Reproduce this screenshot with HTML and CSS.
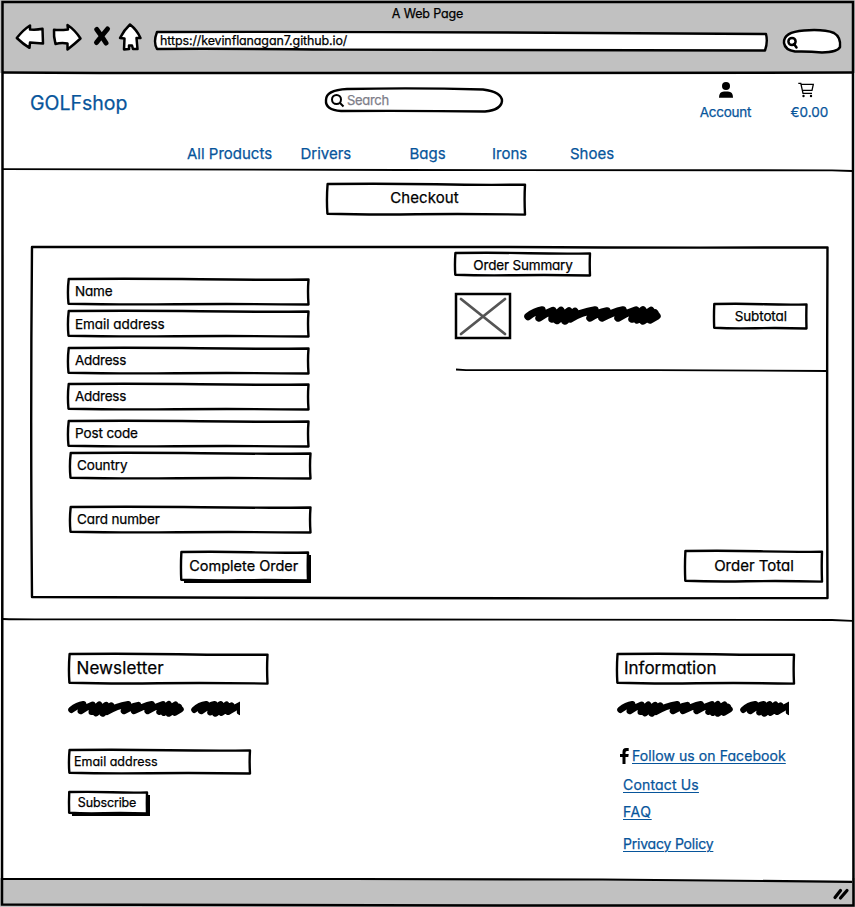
FILE: index.html
```html
<!DOCTYPE html>
<html lang="en">
<head>
<meta charset="utf-8">
<title>GOLFshop – Checkout</title>
<link rel="stylesheet" href="styles.css">
</head>
<body>
<svg class="defs" aria-hidden="true">
  <symbol id="box" viewBox="0 0 100 100" preserveAspectRatio="none">
    <path d="M.3 0 Q30 -2 55 1 T100 2 Q99.600 50 100 102 Q70 99 45 101 T.2 99 Q-.3 50 .3 0Z"/>
  </symbol>
  <symbol id="box2" viewBox="0 0 100 100" preserveAspectRatio="none">
    <path d="M0 0 Q40 -.3 60 0 T100 .1 Q99.900 50 100 100 Q70 100.200 40 100 T0 99.700 Q-.2 50 0 0Z"/>
  </symbol>
  <symbol id="scribble" viewBox="0 0 137 20" preserveAspectRatio="none">
    <path d="M4 11.500 Q11 6 18 5 L15 13 Q22 8 29 5.500 L28 14 L37 5.500 L33 15.500 L45 6 L41 16 L51 6.500 L46 14 Q57 7 71 5 L66 13 Q73 8 83 6 L78 13 Q89 7 99 5 L94 13 Q102 8 112 5 L108 14 L119 5 L113 15 L127 5.500 L119 16 L131 8 L126 15 L133 11"/>
  </symbol>
  <symbol id="scribble-short" viewBox="0 0 58 20" preserveAspectRatio="none">
    <path d="M4 11.500 Q10 6 18 5 L12 13 Q22 6 28 5 L23 14.500 L35 5 L29 16 L42 5.500 L36 15 L48 6.500 L44 14 Q52 9 62 4 L58 14"/>
  </symbol>
</svg>

<div class="window">
  <header class="chrome">
    <p class="title"><span class="t t-title">A Web Page</span></p>
    <div class="bar">
      <svg class="tools" viewBox="0 0 130 34">
        <path class="outl" d="M.8 15 Q7 7 14 2.500 L14 6.500 Q21 7 26.500 5.800 L27 20.500 Q20 20 14 19.500 L13.500 24.800 Q7 21 .8 15Z"/>
        <path class="outl" d="M38 6.800 Q44 7.500 52 6.500 L51.500 2 Q59 7 64.500 15.500 Q58 21.500 51.500 26.500 L51.500 20.500 Q45 19.500 39.500 21 Q37.500 13 38 6.800Z"/>
        <path class="cross" d="M80.800 6.500 Q85 12 90 20 M91.500 6 Q86.500 12 80.500 19.500"/>
        <path class="outl" d="M114 1.500 Q121 7 124.500 15 L120.500 15 L121.500 26 L117 26 L116 22.500 L113 22.500 L113 26 L108 26.500 L108.500 15.500 L104 15 Q108 7 114 1.500Z"/>
      </svg>
      <div class="address">
        <svg class="ink" viewBox="0 0 612 19" preserveAspectRatio="none"><path d="M2 0 Q300 -.5 611 2 Q613 10 610 18.500 Q300 18.800 180 17.600 T2 17 Q-2 10 2 0Z"/></svg>
        <span class="t t-url">https://kevinflanagan7.github.io/</span>
      </div>
      <svg class="pill" viewBox="0 0 60 24">
        <path class="outl" d="M2 14 Q1 3 22 1.500 Q42 0 52 4 Q59 8 58 18 Q56 23 40 23.500 Q26 22 13 22.500 Q3 21 2 14Z"/>
        <circle class="lens" cx="10" cy="12.500" r="3.600"/><path class="lens" d="M12 15 L14.500 18.500"/>
      </svg>
    </div>
  </header>

  <section class="top">
    <div class="row">
      <a class="brand"><span class="t t-brand">GOLFshop</span></a>
      <div class="search">
        <svg class="ink" viewBox="0 0 178 24"><path d="M22 1 Q90 -.5 158 1.500 Q177 4 177 13 Q176 22 160 23.500 Q90 22.500 16 23 Q0 22 1 12 Q1 2 22 1Z"/></svg>
        <svg class="glass" viewBox="0 0 14 14"><circle cx="5.500" cy="5.500" r="4.500"/><path d="M9 9 L12.500 12.500"/></svg>
        <span class="t t-search">Search</span>
      </div>
      <a class="account">
        <svg viewBox="0 0 16 16"><circle cx="8" cy="4" r="4"/><path d="M1 15.800 Q1 9.500 6 9.500 H10 Q15 9.500 15 15.800Z"/></svg>
        <span class="t t-acc">Account</span>
      </a>
      <a class="cart">
        <svg viewBox="0 0 16 16"><path class="thin" d="M.3 1.300 H2.800 L5 11.300 H14 M3.300 2.300 H15.300 L14 8.300 H4.500"/><circle cx="5.500" cy="14" r="1.200"/><circle cx="13" cy="14" r="1.200"/></svg>
        <span class="t t-cart">€0.00</span>
      </a>
    </div>
    <nav class="menu">
      <a><span class="t t-nav">All Products</span></a><a><span class="t t-nav">Drivers</span></a><a><span class="t t-nav">Bags</span></a><a><span class="t t-nav">Irons</span></a><a><span class="t t-nav">Shoes</span></a>
    </nav>
    <svg class="rule" viewBox="0 0 850 4" preserveAspectRatio="none"><path d="M0 1.200 L400 2 L830 2.300 L850 3"/></svg>
  </section>

  <main class="main">
    <h1 class="box checkout"><svg class="ink"><use href="#box"/></svg><span class="t t-check">Checkout</span></h1>
    <div class="panel">
      <svg class="ink"><use href="#box2"/></svg>
      <form class="form">
        <div class="box field"><svg class="ink"><use href="#box"/></svg><span class="t t-name">Name</span></div>
        <div class="box field f2"><svg class="ink"><use href="#box"/></svg><span class="t t-email">Email address</span></div>
        <div class="box field f3"><svg class="ink"><use href="#box"/></svg><span class="t t-addr">Address</span></div>
        <div class="box field f4"><svg class="ink"><use href="#box"/></svg><span class="t t-addr">Address</span></div>
        <div class="box field f5"><svg class="ink"><use href="#box"/></svg><span class="t t-field">Post code</span></div>
        <div class="box field f6"><svg class="ink"><use href="#box"/></svg><span class="t t-field">Country</span></div>
        <div class="box field f7"><svg class="ink"><use href="#box"/></svg><span class="t t-field">Card number</span></div>
        <div class="box btn complete"><svg class="ink"><use href="#box"/></svg><span class="t t-comp">Complete Order</span></div>
      </form>
      <section class="summary">
        <h2 class="box sumhead"><svg class="ink"><use href="#box"/></svg><span class="t t-sum">Order Summary</span></h2>
        <div class="item">
          <svg class="thumb" viewBox="0 0 54 44"><rect x="0" y="0" width="54" height="44"/><path d="M5 5 L49 40 M49 5 L5 40"/></svg>
          <svg class="scr"><use href="#scribble"/></svg>
          <div class="box subtotal"><svg class="ink"><use href="#box"/></svg><span class="t t-field">Subtotal</span></div>
        </div>
        <svg class="rule" viewBox="0 0 372 4" preserveAspectRatio="none"><path d="M0 .5 L10 1.200 L200 1.200 L372 2"/></svg>
        <div class="box total"><svg class="ink"><use href="#box"/></svg><span class="t t-total">Order Total</span></div>
      </section>
    </div>
    <svg class="rule main-rule" viewBox="0 0 850 4" preserveAspectRatio="none"><path d="M0 1 Q15 1.500 50 1.300 L400 1.500 L830 2 L850 2.800"/></svg>
  </main>

  <footer class="foot">
    <section class="news">
      <h2 class="box head"><svg class="ink"><use href="#box"/></svg><span class="t t-news">Newsletter</span></h2>
      <div class="scrs"><svg class="s1"><use href="#scribble"/></svg><svg class="s2"><use href="#scribble-short"/></svg></div>
      <div class="box mail"><svg class="ink"><use href="#box"/></svg><span class="t t-mail">Email address</span></div>
      <div class="box btn subscribe"><svg class="ink"><use href="#box"/></svg><span class="t t-subs">Subscribe</span></div>
    </section>
    <section class="info">
      <h2 class="box head"><svg class="ink"><use href="#box"/></svg><span class="t t-info">Information</span></h2>
      <div class="scrs"><svg class="s1"><use href="#scribble"/></svg><svg class="s2"><use href="#scribble-short"/></svg></div>
      <ul class="links">
        <li class="fb"><svg viewBox="0 0 9 16"><path d="M2.500 16 V9 H0 V6 H2.500 V4 Q2.500 0 6 0 H8.700 V3 H7 Q5.500 3 5.500 4.500 V6 H8.700 L8.300 9 H5.500 V16Z"/></svg><a class="t t-l1">Follow us on Facebook</a></li>
        <li><a class="t t-l2">Contact Us</a></li>
        <li><a class="t t-l3">FAQ</a></li>
        <li><a class="t t-l4">Privacy Policy</a></li>
      </ul>
    </section>
  </footer>

  <div class="status">
    <svg class="edge" viewBox="0 0 850 6" preserveAspectRatio="none"><path class="fill" d="M0 0 H850 V3 L600 1 L0 0Z"/><path d="M0 1 L350 1 L600 1.500 L850 3.800"/></svg>
    <svg class="grip" viewBox="0 0 16 13"><path d="M2 10.500 L7.500 3.500 M7.500 11 L14 3.500"/></svg>
  </div>
  <svg class="frame" viewBox="0 0 855 907"><path d="M2.500 2 L300 2 L853 2 L853 500 L853.500 905.500 L500 905.500 L2 904.500 L2.500 400Z"/><path d="M3 72.500 L100 73 L500 73 L853 72.500"/></svg>
</div>
</body>
</html>
```
FILE: styles.css
```css
* { box-sizing: border-box; }
body { margin: 0; background: #fff; color: #000; font: 13px/16px Inter, "Liberation Sans", sans-serif; font-feature-settings: "cv11"; }
h1, h2, p, ul { margin: 0; padding: 0; font: inherit; list-style: none; }
svg { display: block; overflow: visible; fill: none; stroke: none; flex: none; }
.defs { position: absolute; width: 0; height: 0; }
.t { white-space: nowrap; -webkit-text-stroke: .25px currentColor; }
.window { position: relative; width: 855px; height: 907px; overflow: hidden; display: grid; grid-template-rows: 73px 97px 450px 260px 27px; }
.frame { position: absolute; inset: 0; width: 855px; height: 907px; pointer-events: none; stroke: #000; stroke-width: 2.5; }
.ink { position: absolute; inset: 0; width: 100%; height: 100%; z-index: -1; fill: #fff; stroke: #000; stroke-width: 2.4; stroke-linejoin: round; }
.box > .ink { left: -.2px; top: -.4px; }
.ink path, #box path, #box2 path { vector-effect: non-scaling-stroke; }
#box, #box2 { overflow: visible; }
.rule { width: 100%; height: 4px; stroke: #000; stroke-width: 1.8; }

/* Browser toolbar */
.chrome { background: #c1c1c1; }
.title { text-align: center; padding-top: 5px; height: 23px; }
.bar { display: flex; padding-left: 16px; }
.tools { width: 130px; height: 34px; }
.outl { fill: #fff; stroke: #000; stroke-width: 2.5; stroke-linejoin: round; }
.cross { stroke: #000; stroke-width: 5; stroke-linecap: round; }
.lens { stroke: #000; stroke-width: 2.5; stroke-linecap: round; }
.address { position: relative; z-index: 0; width: 612px; height: 19px; margin: 9px 0 0 9px; padding: 0 0 0 5px; line-height: 16px; }
.pill { width: 60px; height: 24px; margin: 5.500px 0 0 15px; }

/* Shop header */
.top { display: grid; grid-template-rows: 70px 25px 4px; padding: 0 3px; color: #07559b; }
.row { display: flex; }
.brand { width: 295px; padding: 20px 0 0 27px; line-height: 20px; }
.search { position: relative; z-index: 0; display: flex; width: 178px; height: 24px; margin: 15px 0 0 27px; padding: 6px 0 0 6px; }
.glass { width: 14px; height: 14px; margin-right: 2px; stroke: #000; stroke-width: 2; }
.account, .cart { display: flex; flex-direction: column; align-items: center; padding-top: 9px; gap: 6px; }
.account { width: 52px; margin-left: 196.500px; }
.cart { width: 38px; margin-left: 39px; }
.account svg, .cart svg { width: 16px; height: 16px; fill: #000; }
.cart svg { margin-left: -7px; }
.account .t, .cart .t { line-height: 16px; }
.thin { fill: none; stroke: #000; stroke-width: 1.3; }
.menu { display: grid; grid-template-columns: 113.500px 109px 82.500px 78px 60px; padding: 2px 0 0 184px; line-height: 18px; }

/* Checkout */
.box { position: relative; z-index: 0; display: flex; align-items: center; flex: none; }
.main { display: flex; flex-direction: column; height: 450px; }
.checkout { width: 198px; height: 30px; margin: 14px 0 0 327.500px; padding: 0 4px 1.500px 0; justify-content: center; }
.panel { position: relative; z-index: 0; display: flex; flex: none; width: 795.500px; height: 351px; margin: 33px 0 0 32px; }
.form { width: 300px; padding: 32px 0 0 36.500px; }
.field { width: 240.500px; height: 25px; padding: 0 0 1.500px 6.500px; }
.f2 { margin-top: 7.500px; padding-bottom: .5px; }
.f3 { margin-top: 11.500px; }
.f4 { margin-top: 11px; }
.f5 { margin-top: 12px; }
.f6 { margin: 7px 0 0 2px; }
.f7 { margin: 29px 0 0 2px; }
.btn { justify-content: center; box-shadow: 3px 3px 0 #000; }
.complete { width: 127px; height: 28px; margin: 20px 0 0 112.500px; padding-right: 1.500px; }
.summary { width: 372px; margin-left: 123.500px; padding-top: 6px; }
.sumhead { width: 135px; height: 22px; padding-top: 2px; justify-content: center; }
.item { display: flex; height: 94px; padding-top: 19px; }
.thumb { width: 54px; height: 44px; stroke: #000; stroke-width: 2.500; }
.thumb path { stroke: #555; stroke-width: 2.800; stroke-linecap: round; }
.scr { width: 137px; height: 20px; margin: 10.500px 0 0 14.500px; }
#scribble path, #scribble-short path { stroke: #000; stroke-width: 7.500; stroke-linecap: round; stroke-linejoin: round; }
.subtotal { width: 92.500px; height: 24px; margin: 10px 0 0 53.500px; justify-content: center; }
.total { width: 137px; height: 30px; margin: 178.500px 0 0 230px; padding-bottom: 1.500px; justify-content: center; }
.main-rule { margin: 20px 3px 0; width: 849px; }

/* Footer */
.foot { display: flex; padding-top: 34px; }
.news { width: 482px; margin-left: 69px; }
.info { margin-left: 66.500px; }
.head { width: 198.500px; height: 29px; padding: 0 0 1px 7.500px; }
.info .head { width: 177px; padding-left: 6.500px; }
.scrs { display: flex; height: 17px; margin-top: 16.500px; margin-left: -1px; }
.s1 { width: 116px; height: 17px; }
.s2 { width: 49px; height: 17px; margin-left: 7px; overflow: hidden; }
.mail { width: 181px; height: 23px; margin-top: 34px; padding: 0 0 1px 5px; }
.subscribe { width: 78px; height: 21px; margin-top: 18.500px; padding-right: 2px; }
.links { padding: 31.500px 0 0 5.500px; color: #07559b; }
.links li { height: 28.500px; display: flex; }
.links li:nth-child(3) { height: 32px; margin-top: -1px; }
.links a { text-decoration: underline; text-underline-offset: 2px; text-decoration-thickness: 1px; }
.fb svg { width: 9px; height: 16px; margin: 0 3.500px 0 -3.500px; fill: #000; }

/* Status bar */
.status { position: relative; background: #c1c1c1; padding: 0 3px; margin-top: -2px; }
.edge { width: 100%; height: 6px; stroke: #000; stroke-width: 2.200; }
.edge .fill { fill: #fff; stroke: none; }
.grip { width: 16px; height: 13px; margin: 3px 3px 0 auto; stroke: #000; stroke-width: 3.200; stroke-linecap: round; }

/* Type */
.t-title { font-size: 12.500px; letter-spacing: -.15px; }
.t-url { font-size: 12.500px; letter-spacing: -.12px; }
.t-brand { font-size: 19.500px; }
.t-nav { font-size: 15px; }
.t-search { font-size: 13px; letter-spacing: -.3px; color: #7d7d88; line-height: 12px; }
.t-acc { font-size: 13.500px; letter-spacing: -.25px; }
.t-cart { font-size: 13.500px; }
.t-check { font-size: 15px; letter-spacing: .1px; }
.t-total { font-size: 15px; }
.t-comp { font-size: 14.500px; }
.t-name { font-size: 13.500px; letter-spacing: -.2px; }
.t-email { font-size: 13.500px; letter-spacing: -.05px; }
.t-addr { font-size: 13.500px; letter-spacing: -.25px; }
.t-field { font-size: 13.500px; letter-spacing: -.12px; }
.t-sum { font-size: 13.500px; letter-spacing: -.18px; }
.t-news { font-size: 17px; letter-spacing: .1px; }
.t-info { font-size: 17px; }
.t-mail { font-size: 12.500px; }
.t-subs { font-size: 12.500px; letter-spacing: -.15px; }
.t-l1 { font-size: 14px; letter-spacing: .08px; }
.t-l2 { font-size: 14px; letter-spacing: .17px; }
.t-l3 { font-size: 14px; letter-spacing: .6px; }
.t-l4 { font-size: 14px; letter-spacing: -.2px; }
```
